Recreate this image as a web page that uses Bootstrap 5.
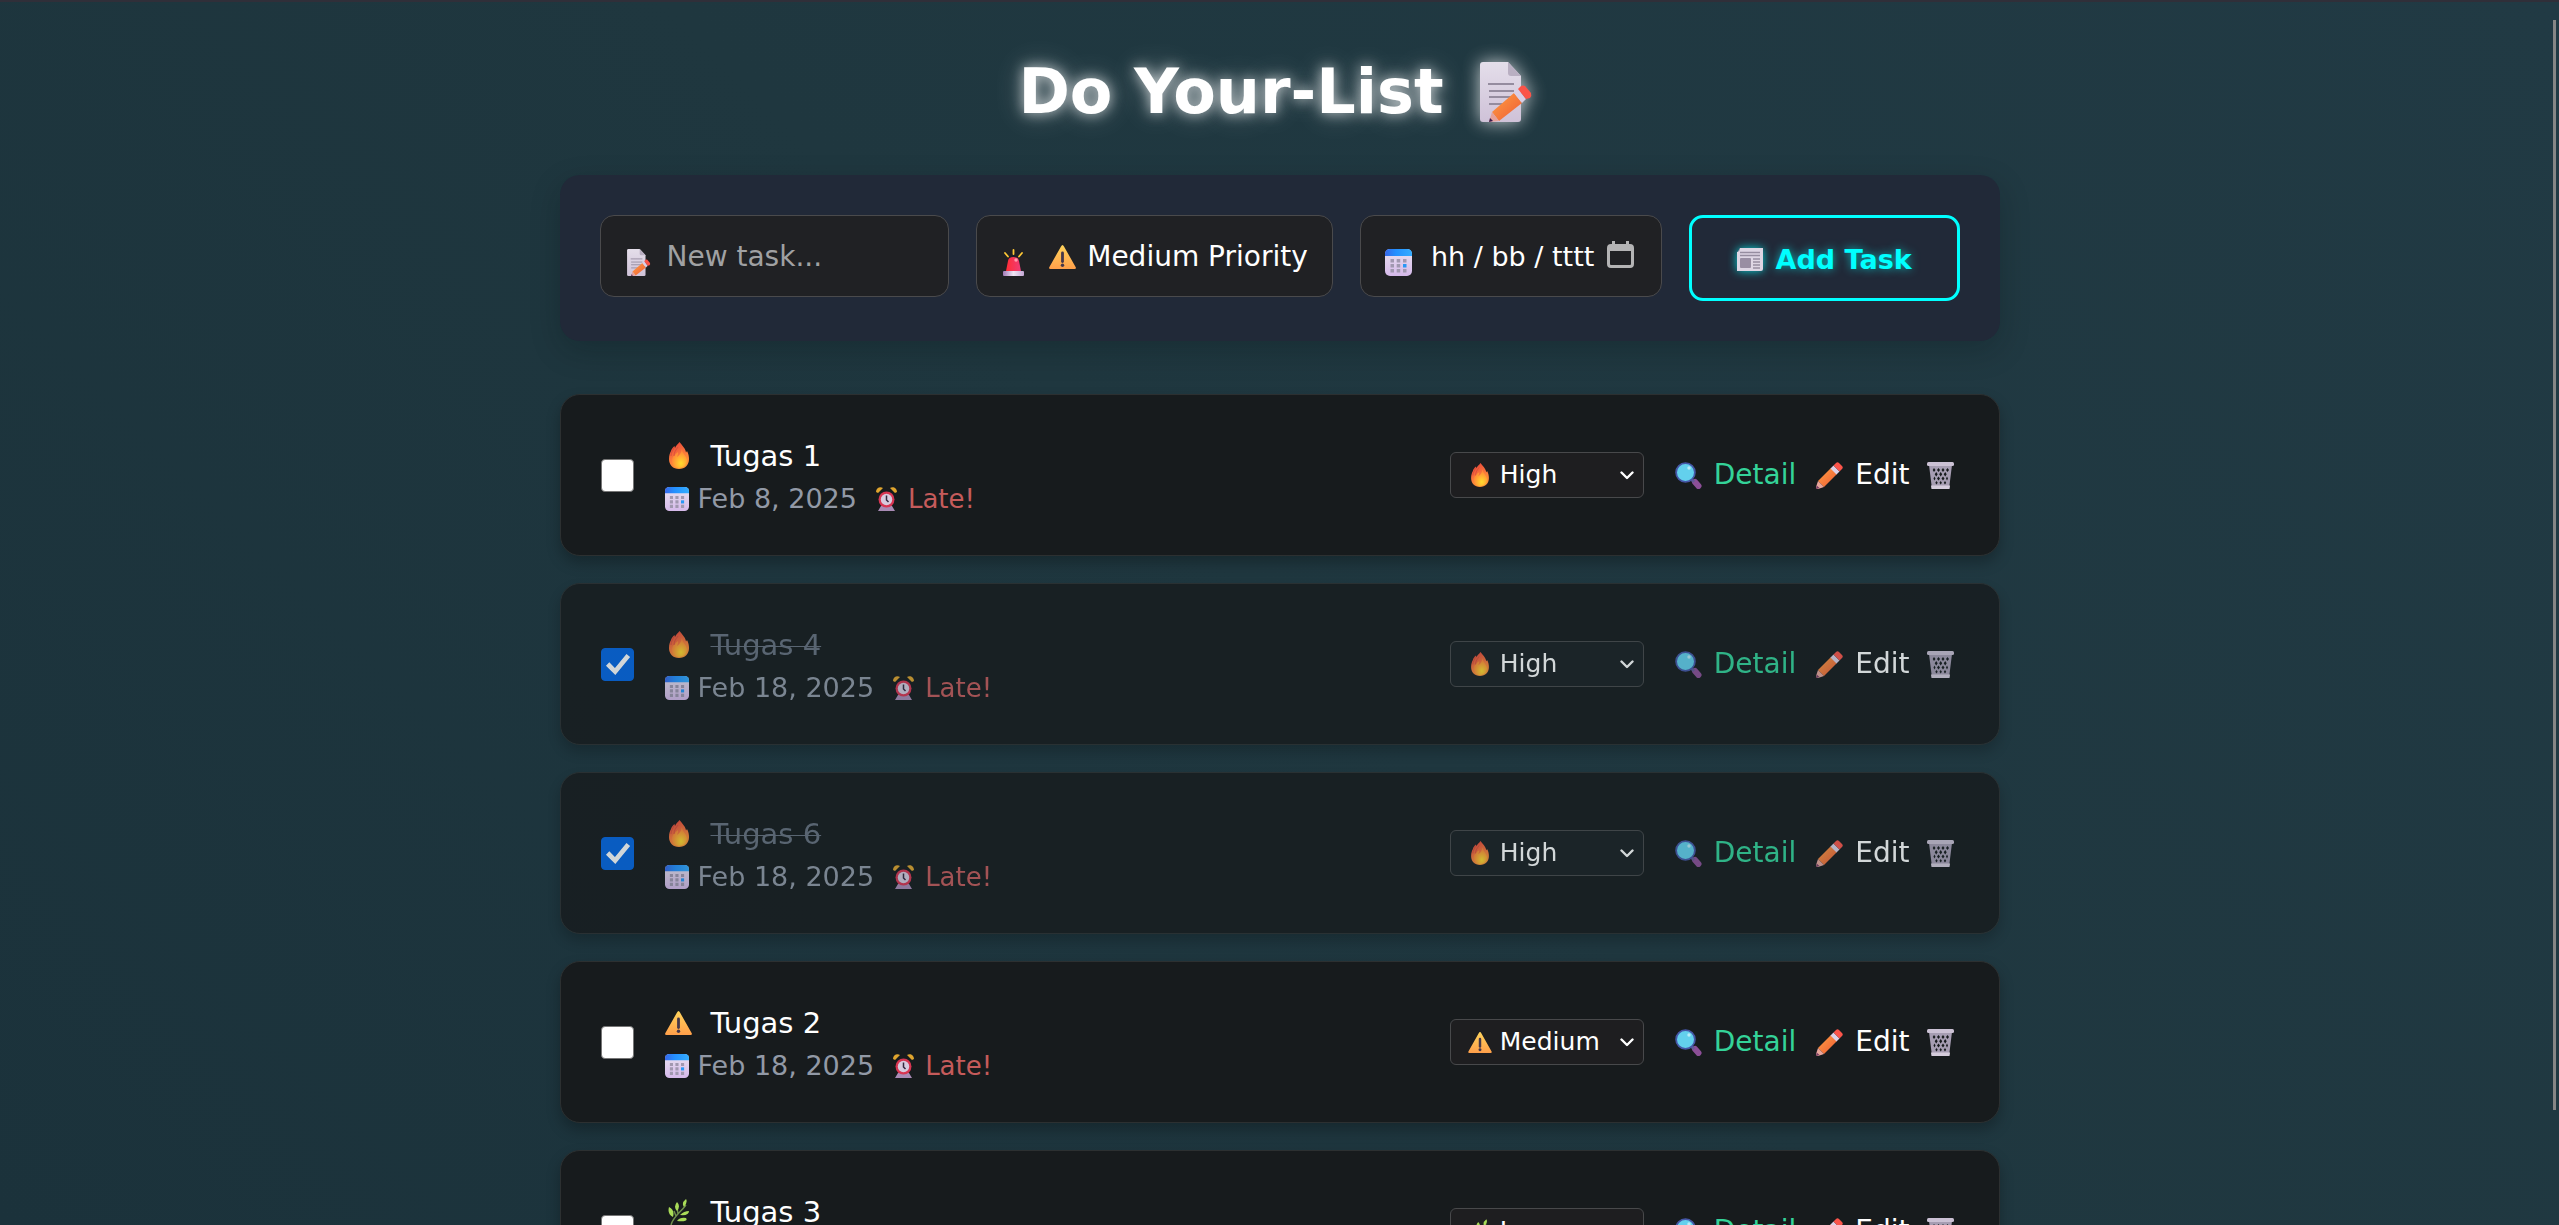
<!DOCTYPE html>
<html lang="en">
<head>
<meta charset="utf-8">
<meta name="viewport" content="width=device-width, initial-scale=1">
<title>Do Your-List</title>
<link href="https://cdn.jsdelivr.net/npm/bootstrap@5.3.0/dist/css/bootstrap.min.css" rel="stylesheet">
<style>
body{font-family:"DejaVu Sans",Verdana,sans-serif;font-size:28px;line-height:32px;color:#fff;background:linear-gradient(45deg,#1b323b,#1f373f 50%,#213a44) fixed;border-top:2px solid #302f39}
.page-scroll{height:calc(100vh - 2px);overflow-y:auto;scrollbar-width:none}
.page-scroll::-webkit-scrollbar{display:none}
.scroll-thumb{position:fixed;right:3px;top:20px;width:3px;height:89vh;background:#868686}
.shell{max-width:1440px}
.sprite{position:absolute;width:0;height:0}
svg{flex:none;display:block}
.page-title{font-size:62px;line-height:72px;font-weight:700;gap:36px;padding:54px 8px 0 0;margin-bottom:47px;text-shadow:0 0 14px rgba(255,255,255,.75),0 0 30px rgba(255,255,255,.3)}
.page-title svg{filter:drop-shadow(0 0 9px rgba(255,255,255,.75))}
.task-form{display:grid;grid-template-columns:350fr 357fr 302fr 271fr;gap:27px;align-items:start;padding:40px;margin-bottom:53px;border-radius:20px;background:#212938;box-shadow:0 10px 30px rgba(0,20,20,.22)}
.field{height:82px;min-width:0;display:flex;align-items:center;padding:2px 24px 0 26px;border:1px solid #4a4a4c;border-radius:14px;background:#202124}
.field-mark{width:40px;margin-top:11px}
.field input,.field select,.priority select{appearance:none;min-width:0;padding:0;border:0;outline:0;background:transparent;color:#fff;flex:1 1 0;width:0}
.field input::placeholder{color:#a0a1a3;opacity:1}
.field select{margin-left:11px}
.field option,.priority option{background:#202124}
.picker{padding:0;border:0;background:none;margin-top:-5px}
.wide-mark{width:46px}
.tight{padding-right:14px}
.date-field{padding-left:24px;padding-right:27px}
.date-field input{font-size:27px}
.add-btn{height:86px;display:flex;align-items:center;justify-content:center;gap:13px;padding:3px 0 0;border:3px solid #0ff;border-radius:14px;background:transparent;color:#0ff;font-size:27px;font-weight:700;text-shadow:0 0 10px rgba(0,255,255,.65)}
.add-btn svg{filter:drop-shadow(0 0 5px rgba(0,255,255,.8))}
.task-list{display:flex;flex-direction:column;gap:27px;padding-bottom:60px}
.task{height:162px;display:flex;align-items:center;padding:0 39px 0 40px;border:1px solid #2c3031;border-radius:20px;background:#171b1d;box-shadow:0 7px 14px rgba(0,0,0,.25)}
.task-done{opacity:.8}
.task .form-check-input{width:33px;height:33px;margin:0 31px 0 0;flex:none;border:1px solid #767676;border-radius:4px;background-color:#fff}
.task .form-check-input:checked{border-color:#0566e3;background-color:#0566e3;background-size:100% 100%;background-image:url("data:image/svg+xml,%3csvg xmlns='http://www.w3.org/2000/svg' viewBox='0 0 33 33'%3e%3cpath d='M6 16l8 8L28 7' fill='none' stroke='white' stroke-width='5'/%3e%3c/svg%3e")}
.task-info{padding-top:4px}
.task-name{height:32px;display:flex;align-items:center;margin-bottom:11px;font-size:29px}
.name-mark{width:46px;display:flex}
.name-mark svg{margin-left:auto;margin-right:auto}
.name-slot{width:28px}
.task-done .task-text{color:#68717f;text-decoration:line-through;text-decoration-thickness:1px}
.task-meta{display:flex;align-items:center;font-size:27px;line-height:32px;color:#9299a6}
.task-meta svg{margin-right:9px}
.task-meta .bell{margin:0 11px 0 19px}
.late{color:#c55b5b;font-size:26px}
.priority{width:194px;height:46px;display:flex;align-items:center;padding:0 9px 0 16px;margin-right:31px;border:1px solid #48494b;border-radius:6px;background:#1e1e20}
.task-done .priority{background:#1b2023}
.priority-mark{width:26px;margin-right:7px;display:flex;justify-content:center}
.priority select{font-size:25px;line-height:32px;height:36px}
.act{display:flex;align-items:center;gap:12px;padding:0;border:0;background:none;color:#fff;white-space:nowrap}
.act-detail{color:#34d399;margin-right:20px}
.act-edit{margin-right:17px}
.act-bin{margin-right:6px}
</style>
<script src="https://cdn.jsdelivr.net/npm/bootstrap@5.3.0/dist/js/bootstrap.bundle.min.js"></script>
</head>
<body>
<svg class="sprite" aria-hidden="true">
<defs>
<linearGradient id="gPaper" x1="0" y1="0" x2="0" y2="1"><stop offset="0" stop-color="#e4deea"/><stop offset="1" stop-color="#cfc2d8"/></linearGradient>
<linearGradient id="gPen" x1="0" y1="0" x2="1" y2="1"><stop offset="0" stop-color="#ffa043"/><stop offset="1" stop-color="#ee5a35"/></linearGradient>
<linearGradient id="gFire" x1=".3" y1="0" x2=".7" y2="1"><stop offset="0" stop-color="#e8453a"/><stop offset=".55" stop-color="#fb7d3b"/><stop offset="1" stop-color="#ff9c35"/></linearGradient>
<radialGradient id="gGlow" cx=".6" cy=".75" r=".6"><stop offset="0" stop-color="#ffdc2e"/><stop offset="1" stop-color="#ff8b36"/></radialGradient>
<linearGradient id="gWarn" x1="0" y1="0" x2="0" y2="1"><stop offset="0" stop-color="#ffd45c"/><stop offset="1" stop-color="#ff9f4a"/></linearGradient>
<linearGradient id="gCal" x1="0" y1="0" x2="1" y2="0"><stop offset="0" stop-color="#3767e8"/><stop offset=".4" stop-color="#2490ff"/><stop offset="1" stop-color="#34adff"/></linearGradient>
<linearGradient id="gCalBody" x1="0" y1="0" x2="0" y2="1"><stop offset="0" stop-color="#e8e2ef"/><stop offset="1" stop-color="#d5b9ea"/></linearGradient>
<linearGradient id="gSiren" x1="0" y1="0" x2="1" y2="0"><stop offset="0" stop-color="#ff2d35"/><stop offset="1" stop-color="#ee3d78"/></linearGradient>
<linearGradient id="gBase" x1="0" y1="0" x2="1" y2="0"><stop offset="0" stop-color="#a27bb8"/><stop offset=".5" stop-color="#efe6f5"/><stop offset="1" stop-color="#c3a6d4"/></linearGradient>
</defs>
<symbol id="i-memo" viewBox="0 0 53 60">
<path fill="url(#gPaper)" d="M3 0h25l13 14v43q0 3-3 3H3q-3 0-3-3V3q0-3 3-3z"/><path fill="#b9afc2" d="M28 0l13 14H31q-3 0-3-3z"/>
<path stroke="#958c9f" stroke-width="2" d="M8 22h26M9 29h25M9 35h22M9 42h16"/>
<path fill="url(#gPen)" d="M12 50L34 31l8 10-23 18z"/><path fill="#d9cfe6" d="M34 31l4-4 8 10-4 4z"/><path fill="#fb5449" d="M38 27l3-3q2-1 4 0l6 7q1 3-1 5l-4 1z"/><path fill="#e5a19b" d="M12 50l7 9-10 1z"/><path fill="#3c1a4c" d="M10 56l3 3-4 1z"/>
</symbol>
<symbol id="i-fire" viewBox="0 0 20 27">
<path fill="url(#gFire)" d="M10.500 0c3 4 5 5.500 6 8.500l.500 2 1-1.500c1.500 3 2 5 2 8 0 6-4 10-10 10S0 23 0 17c0-4 1-6 2-8 .500-2 2-4 3.500-5L6 6c1-3 3-3.500 4.500-6z"/>
<path fill="url(#gGlow)" d="M13 7c0 4 4 6 5 11 0 5-4 8-8 8s-7-3-7-7c0-5 4-7 6-9 .500 2-1 4-1 5 3-2 4-4 5-8z"/><path fill="none" stroke="#d4473b" stroke-width=".8" d="M2 14c0-4 2-5 3-9M5 14c0-4 2-6 4-9"/>
</symbol>
<symbol id="i-warn" viewBox="0 0 27 24">
<path fill="url(#gWarn)" d="M12 1.500q1.500-3 3 0L26.600 22q1 2-1 2H1.400q-2 0-1-2z"/><path stroke="#45374a" stroke-width="2.800" stroke-linecap="round" d="M13.500 8v8.500"/><circle cx="13.500" cy="20.300" r="1.700" fill="#45374a"/>
</symbol>
<symbol id="i-cal" viewBox="0 0 27 27">
<rect width="27" height="27" rx="5" fill="url(#gCalBody)"/><path fill="url(#gCal)" d="M0 7V5q0-5 5-5h17q5 0 5 5v2z"/>
<path fill="#a198b0" d="M5.500 10h3.500v3.500H5.500zM11.700 10h3.500v3.500h-3.500zM18 10h3.500v3.500H18zM5.500 15h3.500v3.500H5.500zM11.700 15h3.500v3.500h-3.500zM5.500 20h3.500v3.500H5.500zM11.700 20h3.500v3.500h-3.500zM18 20h3.500v3.500H18z"/><path fill="#2997f5" d="M18 15h3.500v3.500H18z"/>
</symbol>
<symbol id="i-siren" viewBox="0 0 21 27">
<path stroke="#fec836" stroke-width="1.800" stroke-linecap="round" d="M10.500 1v4M2 4l3 3.500M19 4l-3 3.500"/><path fill="url(#gSiren)" d="M3 22L5 12q.500-4 5.500-4t5.500 4l2 10z"/><circle cx="13" cy="11" r="1.700" fill="#ff9dae"/><rect y="22" width="21" height="5" rx="1" fill="url(#gBase)"/>
</symbol>
<symbol id="i-news" viewBox="0 0 26 23">
<path fill="#a99bb2" d="M3 0h22v5H0z"/><path fill="#ded6e4" d="M0 4q3 0 3-4h23v21q0 2-2 2H0z"/><path stroke="#968da0" stroke-width="1.300" d="M3 4.500h20M3 7.500h20M16 11h7M16 14h7M16 17h7M16 20h7"/><rect x="3" y="10" width="11" height="10" rx="1" fill="#998ea3"/>
</symbol>
<symbol id="i-bell" viewBox="0 0 21 24">
<path fill="#e0a52e" d="M0 5C0 1 4-1 7 1L2 6zM21 5c0-4-4-6-7-4l5 5z"/><path fill="#a98bb5" d="M5 19h11l3 5H2z"/><circle cx="10.500" cy="12.500" r="8" fill="#d83552"/><circle cx="10.500" cy="12.500" r="5.700" fill="#d8cbdf"/><path fill="none" stroke="#34283f" stroke-width="1.500" d="M10.500 8.500V13l2 2"/>
</symbol>
<symbol id="i-lens" viewBox="0 0 27 27">
<path stroke="#8c4f97" stroke-width="6" stroke-linecap="round" d="M20 20l3.500 4"/><path stroke="#635a96" stroke-width="3" d="M15 16l4 4"/><circle cx="10.500" cy="10.500" r="9.400" fill="#63d0ed" stroke="#4557a7" stroke-width="1.800"/><circle cx="14" cy="6" r="1.700" fill="#b9edf8"/>
</symbol>
<symbol id="i-pen" viewBox="0 0 27 27">
<path fill="url(#gPen)" d="M2 19L15 6l6 6L8 25z"/><path fill="#dcd1e8" d="M14.500 6.500l3-3 6 6-3 3z"/><path fill="#fc554b" d="M17.500 3.500L20 1q1.500-1.500 3 0l3 3q1.500 1.500 0 3l-2.500 2.500z"/><path fill="#e8a59b" d="M2 19l6 6-6 2q-2.500 0-2-2z"/><path fill="#753b60" d="M.7 23.500L3.500 26 0 27z"/>
</symbol>
<symbol id="i-bin" viewBox="0 0 27 27">
<path fill="#a69db2" d="M2 3h23l-3 24H5z"/><path fill="#171b1d" d="M7 6l1.500 2L7 10 5.700 8zM11.500 6L13 8l-1.500 2L10 8zM16 6l1.500 2-1.500 2-1.500-2zM20.500 6L22 8l-1.500 2L19 8zM9.200 10l1.500 2.200-1.500 2.200-1.500-2.200zM13.700 10l1.500 2.200-1.500 2.200-1.500-2.200zM18.200 10l1.500 2.200-1.500 2.200-1.500-2.200zM7.500 14.500l1 2-1 2-1-2zM11.500 14.500l1.500 2-1.500 2-1.500-2zM16 14.500l1.500 2-1.500 2-1.500-2zM20 14.500l1 2-1 2-1-2zM9.500 19l1.200 1.800-1.200 1.800-1.200-1.800zM13.700 19l1.200 1.800-1.200 1.800-1.200-1.800zM18 19l1.200 1.800-1.200 1.800-1.200-1.800z"/><rect width="27" height="4" rx="1.500" fill="#cbc1d4"/><path fill="#d5ccdc" d="M4 23.500h19l-.5 3.500H4.500z"/>
</symbol>
<symbol id="i-herb" viewBox="0 0 22 26">
<path fill="none" stroke="#6f8f4c" stroke-width="1.400" d="M3 26C5 18 12 14 18 6M8 17L6 12M10 15L9 8"/><g fill="#a9dc58"><path d="M18 0q2 3-2 8-3-4 2-8zM9 3q4 4 0 9-4-4 0-9zM1 8q6 3 4 10-6-3-4-10zM21 12q0 5-9 4 4-4 9-4zM18 19q3 4-9 3 3-4 9-3z"/></g>
</symbol>
<symbol id="i-down" viewBox="0 0 14 9"><path fill="none" stroke="#fff" stroke-width="2.400" stroke-linecap="round" stroke-linejoin="round" d="M1.500 1.500L7 7l5.500-5.500"/></symbol>
<symbol id="i-pick" viewBox="0 0 27 27"><path fill="#b4b4b5" fill-rule="evenodd" d="M4 3h1V0h3v3h11V0h3v3h1q4 0 4 4v16q0 4-4 4H4q-4 0-4-4V7q0-4 4-4zM3 10v13q0 1 1 1h19q1 0 1-1V10z"/></symbol>
</svg>

<div class="page-scroll">
<main class="shell mx-auto">
<h1 class="page-title d-flex justify-content-center align-items-center">Do Your-List <svg width="53" height="60"><use href="#i-memo"/></svg></h1>

<form class="task-form">
  <div class="field"><div class="field-mark"><svg width="24" height="27"><use href="#i-memo"/></svg></div><input type="text" placeholder="New task..." aria-label="New task"></div>
  <div class="field tight"><div class="field-mark wide-mark"><svg width="21" height="27"><use href="#i-siren"/></svg></div><svg width="27" height="24"><use href="#i-warn"/></svg><select aria-label="Priority"><option>Medium Priority</option></select></div>
  <div class="field date-field"><div class="field-mark wide-mark"><svg width="27" height="27"><use href="#i-cal"/></svg></div><input type="text" value="hh / bb / tttt" aria-label="Due date"><button class="picker" type="button" aria-label="Open calendar"><svg width="27" height="27"><use href="#i-pick"/></svg></button></div>
  <button class="add-btn" type="button"><svg width="26" height="23"><use href="#i-news"/></svg>Add Task</button>
</form>

<div class="task-list">
  <article class="task">
    <input class="form-check-input" type="checkbox" id="t1">
    <div class="task-info flex-grow-1">
      <div class="task-name"><div class="name-mark"><div class="name-slot"><svg width="20" height="27"><use href="#i-fire"/></svg></div></div><label class="task-text" for="t1">Tugas 1</label></div>
      <div class="task-meta"><svg width="24" height="24"><use href="#i-cal"/></svg>Feb 8, 2025<svg class="bell" width="21" height="24"><use href="#i-bell"/></svg><span class="late">Late!</span></div>
    </div>
    <div class="priority"><div class="priority-mark"><svg width="18" height="24"><use href="#i-fire"/></svg></div><select aria-label="Priority of Tugas 1"><option>High</option></select><svg width="14" height="9"><use href="#i-down"/></svg></div>
    <button class="act act-detail" type="button"><svg width="27" height="27"><use href="#i-lens"/></svg>Detail</button>
    <button class="act act-edit" type="button"><svg width="27" height="27"><use href="#i-pen"/></svg>Edit</button>
    <button class="act act-bin" type="button" aria-label="Delete"><svg width="27" height="27"><use href="#i-bin"/></svg></button>
  </article>
  <article class="task task-done">
    <input class="form-check-input" type="checkbox" id="t4" checked>
    <div class="task-info flex-grow-1">
      <div class="task-name"><div class="name-mark"><div class="name-slot"><svg width="20" height="27"><use href="#i-fire"/></svg></div></div><label class="task-text" for="t4">Tugas 4</label></div>
      <div class="task-meta"><svg width="24" height="24"><use href="#i-cal"/></svg>Feb 18, 2025<svg class="bell" width="21" height="24"><use href="#i-bell"/></svg><span class="late">Late!</span></div>
    </div>
    <div class="priority"><div class="priority-mark"><svg width="18" height="24"><use href="#i-fire"/></svg></div><select aria-label="Priority of Tugas 4"><option>High</option></select><svg width="14" height="9"><use href="#i-down"/></svg></div>
    <button class="act act-detail" type="button"><svg width="27" height="27"><use href="#i-lens"/></svg>Detail</button>
    <button class="act act-edit" type="button"><svg width="27" height="27"><use href="#i-pen"/></svg>Edit</button>
    <button class="act act-bin" type="button" aria-label="Delete"><svg width="27" height="27"><use href="#i-bin"/></svg></button>
  </article>
  <article class="task task-done">
    <input class="form-check-input" type="checkbox" id="t6" checked>
    <div class="task-info flex-grow-1">
      <div class="task-name"><div class="name-mark"><div class="name-slot"><svg width="20" height="27"><use href="#i-fire"/></svg></div></div><label class="task-text" for="t6">Tugas 6</label></div>
      <div class="task-meta"><svg width="24" height="24"><use href="#i-cal"/></svg>Feb 18, 2025<svg class="bell" width="21" height="24"><use href="#i-bell"/></svg><span class="late">Late!</span></div>
    </div>
    <div class="priority"><div class="priority-mark"><svg width="18" height="24"><use href="#i-fire"/></svg></div><select aria-label="Priority of Tugas 6"><option>High</option></select><svg width="14" height="9"><use href="#i-down"/></svg></div>
    <button class="act act-detail" type="button"><svg width="27" height="27"><use href="#i-lens"/></svg>Detail</button>
    <button class="act act-edit" type="button"><svg width="27" height="27"><use href="#i-pen"/></svg>Edit</button>
    <button class="act act-bin" type="button" aria-label="Delete"><svg width="27" height="27"><use href="#i-bin"/></svg></button>
  </article>
  <article class="task">
    <input class="form-check-input" type="checkbox" id="t2">
    <div class="task-info flex-grow-1">
      <div class="task-name"><div class="name-mark"><div class="name-slot"><svg width="27" height="24"><use href="#i-warn"/></svg></div></div><label class="task-text" for="t2">Tugas 2</label></div>
      <div class="task-meta"><svg width="24" height="24"><use href="#i-cal"/></svg>Feb 18, 2025<svg class="bell" width="21" height="24"><use href="#i-bell"/></svg><span class="late">Late!</span></div>
    </div>
    <div class="priority"><div class="priority-mark"><svg width="24" height="21"><use href="#i-warn"/></svg></div><select aria-label="Priority of Tugas 2"><option>Medium</option></select><svg width="14" height="9"><use href="#i-down"/></svg></div>
    <button class="act act-detail" type="button"><svg width="27" height="27"><use href="#i-lens"/></svg>Detail</button>
    <button class="act act-edit" type="button"><svg width="27" height="27"><use href="#i-pen"/></svg>Edit</button>
    <button class="act act-bin" type="button" aria-label="Delete"><svg width="27" height="27"><use href="#i-bin"/></svg></button>
  </article>
  <article class="task">
    <input class="form-check-input" type="checkbox" id="t3">
    <div class="task-info flex-grow-1">
      <div class="task-name"><div class="name-mark"><div class="name-slot"><svg width="22" height="26"><use href="#i-herb"/></svg></div></div><label class="task-text" for="t3">Tugas 3</label></div>
      <div class="task-meta"><svg width="24" height="24"><use href="#i-cal"/></svg>Feb 18, 2025<svg class="bell" width="21" height="24"><use href="#i-bell"/></svg><span class="late">Late!</span></div>
    </div>
    <div class="priority"><div class="priority-mark"><svg width="20" height="24"><use href="#i-herb"/></svg></div><select aria-label="Priority of Tugas 3"><option>Low</option></select><svg width="14" height="9"><use href="#i-down"/></svg></div>
    <button class="act act-detail" type="button"><svg width="27" height="27"><use href="#i-lens"/></svg>Detail</button>
    <button class="act act-edit" type="button"><svg width="27" height="27"><use href="#i-pen"/></svg>Edit</button>
    <button class="act act-bin" type="button" aria-label="Delete"><svg width="27" height="27"><use href="#i-bin"/></svg></button>
  </article>
</div>
</main>
</div>
<div class="scroll-thumb"></div>
</body>
</html>
